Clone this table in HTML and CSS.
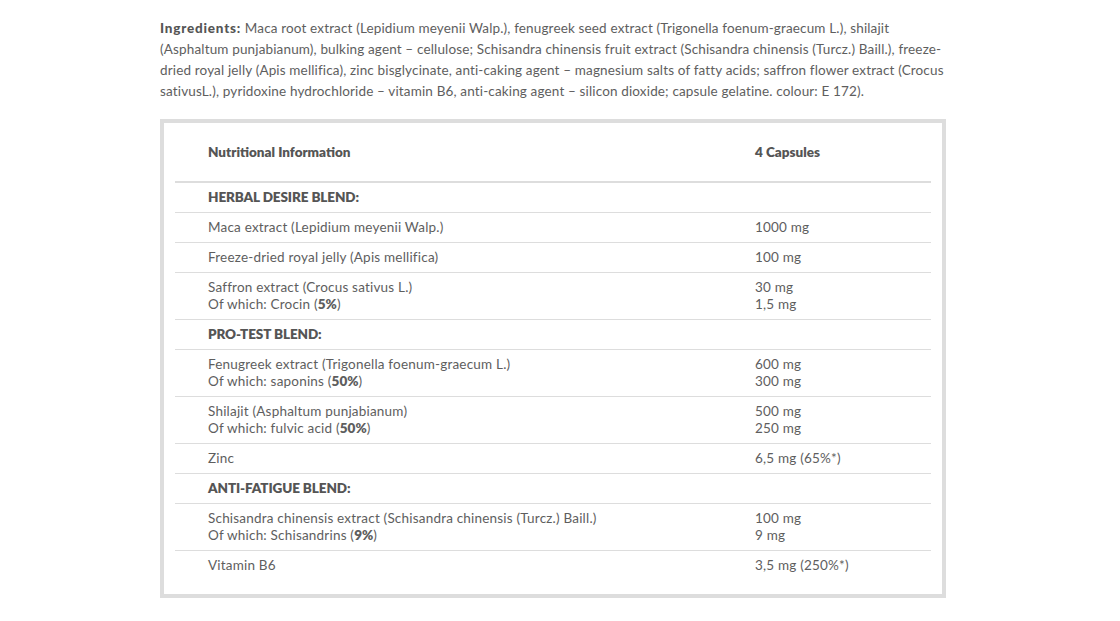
FILE: index.html
```html
<!DOCTYPE html>
<html>
<head>
<meta charset="utf-8">
<link rel="stylesheet" href="styles.css">
</head>
<body>
<div class="page">
  <p class="ingredients"><b>Ingredients:</b> Maca root extract (Lepidium meyenii Walp.), fenugreek seed extract (Trigonella foenum-graecum L.), shilajit<br>(Asphaltum punjabianum), bulking agent – cellulose; Schisandra chinensis fruit extract (Schisandra chinensis (Turcz.) Baill.), freeze-<br>dried royal jelly (Apis mellifica), zinc bisglycinate, anti-caking agent – magnesium salts of fatty acids; saffron flower extract (Crocus<br>sativusL.), pyridoxine hydrochloride – vitamin B6, anti-caking agent – silicon dioxide; capsule gelatine. colour: E 172).</p>
  <div class="box">
    <div class="table">
      <div class="row head"><div>Nutritional Information</div><div>4 Capsules</div></div>
      <div class="row section"><div>HERBAL DESIRE BLEND:</div><div></div></div>
      <div class="row"><div>Maca extract (Lepidium meyenii Walp.)</div><div>1000 mg</div></div>
      <div class="row"><div>Freeze-dried royal jelly (Apis mellifica)</div><div>100 mg</div></div>
      <div class="row"><div>Saffron extract (Crocus sativus L.)<br>Of which: Crocin (<b>5%</b>)</div><div>30 mg<br>1,5 mg</div></div>
      <div class="row section"><div>PRO-TEST BLEND:</div><div></div></div>
      <div class="row"><div>Fenugreek extract (Trigonella foenum-graecum L.)<br>Of which: saponins (<b>50%</b>)</div><div>600 mg<br>300 mg</div></div>
      <div class="row"><div>Shilajit (Asphaltum punjabianum)<br>Of which: fulvic acid (<b>50%</b>)</div><div>500 mg<br>250 mg</div></div>
      <div class="row"><div>Zinc</div><div>6,5 mg (65%*)</div></div>
      <div class="row section"><div>ANTI-FATIGUE BLEND:</div><div></div></div>
      <div class="row"><div>Schisandra chinensis extract (Schisandra chinensis (Turcz.) Baill.)<br>Of which: Schisandrins (<b>9%</b>)</div><div>100 mg<br>9 mg</div></div>
      <div class="row last"><div>Vitamin B6</div><div>3,5 mg (250%*)</div></div>
    </div>
  </div>
</div>
</body>
</html>
```

FILE: styles.css
```css
html, body {
  margin: 0;
  padding: 0;
  background: #ffffff;
}
body {
  font-family: "Lato", "Open Sans", sans-serif;
  font-size: 13.5px;
  letter-spacing: 0.2px;
  color: #5e5e5e;
}
.page {
  width: 786px;
  margin-left: 160px;
  padding-top: 18px;
}
.ingredients {
  margin: 0 0 17px 0;
  line-height: 21px;
  letter-spacing: 0.15px;
  white-space: nowrap;
}
.ingredients b {
  font-weight: 900;
  letter-spacing: 0.8px;
  color: #555;
}
.box {
  border: 4px solid #dddddd;
  padding: 0 11px 14px 11px;
}
.row {
  display: grid;
  grid-template-columns: 547px 1fr;
  padding: 6px 0 6px 33px;
  line-height: 17px;
  border-bottom: 1px solid #dddddd;
}
.row b, .head, .section {
  font-weight: 800;
  letter-spacing: 0;
}
.head {
  padding-top: 21px;
  padding-bottom: 20px;
  border-bottom: 2px solid #dddddd;
  color: #555;
}
.section {
  color: #555;
  letter-spacing: -0.1px;
}
.last {
  border-bottom: none;
}
```
